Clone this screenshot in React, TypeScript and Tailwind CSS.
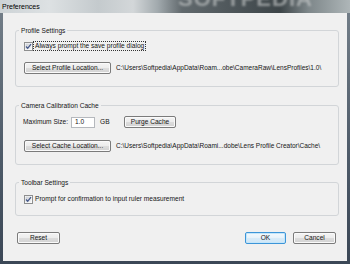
import React from "react";

function Check({ id }: { id: string }) {
  return (
    <svg width="9" height="9" viewBox="0 0 9 9" className="shrink-0">
      <defs>
        <linearGradient id={id} x1="0" y1="0" x2="1" y2="1">
          <stop offset="0" stopColor="#c9cdd3" />
          <stop offset="1" stopColor="#f7f7f7" />
        </linearGradient>
      </defs>
      <rect x="0.5" y="0.5" width="8" height="8" fill="#fff" stroke="#8e8f8f" />
      <rect x="1.5" y="1.5" width="6" height="6" fill={`url(#${id})`} />
      <path d="M2 4.5 L3.7 6.3 L7 2.2" fill="none" stroke="#46598a" strokeWidth="1.3" />
    </svg>
  );
}

function Btn({ label, className, def }: { label: string; className: string; def?: boolean }) {
  return (
    <button
      type="button"
      className={`${className} flex h-[12px] shrink-0 items-center justify-center rounded-[2px] border text-[6.6px] leading-none text-[#151515] ${
        def
          ? "border-[#3c95d8] bg-[linear-gradient(#f3f9fd_0%,#e7f2fa_50%,#d8ebf8_50%,#cfe6f6_100%)] shadow-[inset_0_0_0_1px_#c4e6fa]"
          : "border-[#7b7b7b] bg-[linear-gradient(#f4f4f4_0%,#ececec_50%,#dddddd_50%,#d2d2d2_100%)] shadow-[inset_0_0_0_1px_#fafafa]"
      }`}
    >
      {label}
    </button>
  );
}

function Group({ title, className, children }: { title: string; className: string; children: React.ReactNode }) {
  return (
    <fieldset className={`${className} ml-[12px] w-[324px] rounded-[3px] border border-[#d2d5d8] pl-[3px]`}>
      <legend className="px-[2px] text-[6.6px] leading-[11px]">{title}</legend>
      {children}
    </fieldset>
  );
}

export default function App() {
  return (
    <div className="flex h-[264px] w-[350px] flex-col overflow-hidden bg-[linear-gradient(180deg,#75808a_0%,#4d5a68_60%,#3b4756_100%)] font-['Liberation_Sans',Arial,sans-serif] text-[#151515]">
      {/* Title bar */}
      <div className="relative h-[13px] shrink-0 overflow-hidden bg-[linear-gradient(90deg,#cdd3d6_0%,#dde1e3_14%,#c4cacd_28%,#d3d7d9_38%,#a2aaae_45%,#61696d_52%,#4c5458_68%,#3d4548_80%,#7d8689_88%,#aeb6b8_100%)]">
        <span className="absolute left-[178px] top-[-12px] text-[22px] font-bold leading-[22px] tracking-[1px] text-[#c9cccc] opacity-60 blur-[1px]">
          SOFTPEDIA
        </span>
        <span className="absolute left-[2px] top-[2px] text-[7px] leading-[9px] text-black">Preferences</span>
      </div>

      {/* Client area */}
      <div className="relative mx-[3px] mb-[3px] flex-1 bg-[#f0f0f0]">
        <Group title="Profile Settings" className="mt-[12px]">
          <div className="pb-[12px] pl-[5px] pt-[5px]">
            <div className="flex h-[10px] items-center">
              <Check id="c1" />
              <span className="border border-dotted border-[#333] px-[1px] text-[6.6px] leading-[8px]">
                Always prompt the save profile dialog
              </span>
            </div>
            <div className="mt-[11px] flex items-center">
              <Btn label="Select Profile Location..." className="w-[87px]" />
              <span className="ml-[5px] whitespace-nowrap text-[6.5px]">
                {"C:\\Users\\Softpedia\\AppData\\Roam...obe\\CameraRaw\\LensProfiles\\1.0\\"}
              </span>
            </div>
          </div>
        </Group>

        <Group title="Camera Calibration Cache" className="mt-[13px]">
          <div className="pb-[12px] pl-[5px] pt-[5px]">
            <div className="flex h-[12px] items-center text-[6.6px]">
              <span className="-ml-[1px] w-[48px] shrink-0">Maximum Size:</span>
              <div className="flex h-[11px] w-[24px] shrink-0 items-center border border-[#b5b8bd] bg-white pl-[3px]">1.0</div>
              <span className="ml-[5px] w-[24px] shrink-0">GB</span>
              <Btn label="Purge Cache" className="w-[52px]" />
            </div>
            <div className="mt-[12px] flex items-center">
              <Btn label="Select Cache Location..." className="w-[87px]" />
              <span className="ml-[5px] whitespace-nowrap text-[6.5px]">
                {"C:\\Users\\Softpedia\\AppData\\Roami...dobe\\Lens Profile Creator\\Cache\\"}
              </span>
            </div>
          </div>
        </Group>

        <Group title="Toolbar Settings" className="mt-[12px]">
          <div className="pb-[11px] pl-[5px] pt-[6px]">
            <div className="flex h-[10px] items-center">
              <Check id="c2" />
              <span className="ml-[2px] text-[6.6px] leading-[8px]">Prompt for confirmation to input ruler measurement</span>
            </div>
          </div>
        </Group>

        <div className="mt-[16px] flex pl-[14px]">
          <Btn label="Reset" className="w-[43px]" />
          <Btn label="OK" className="ml-[185px] w-[41px]" def />
          <Btn label="Cancel" className="ml-[7px] w-[43px]" />
        </div>
      </div>
    </div>
  );
}
